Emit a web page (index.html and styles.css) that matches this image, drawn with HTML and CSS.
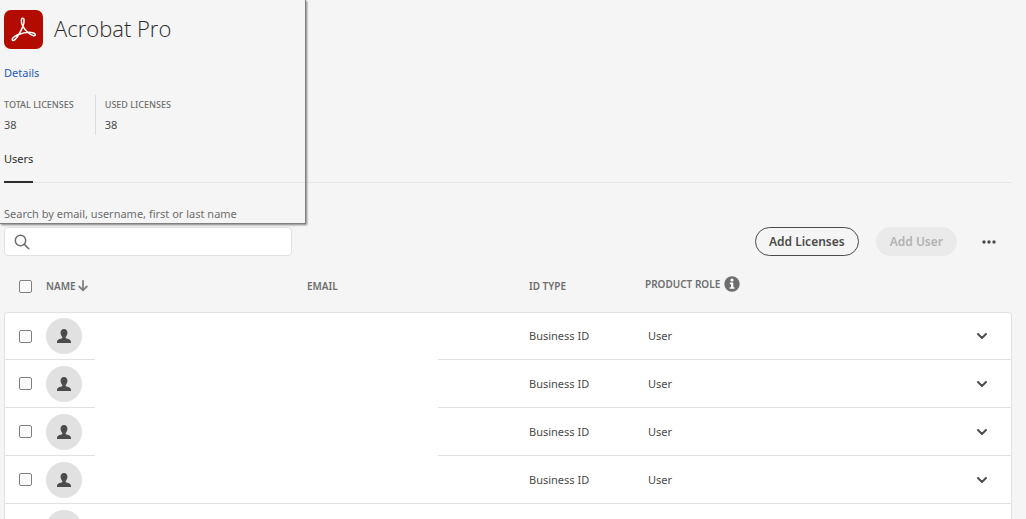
FILE: index.html
```html
<!DOCTYPE html>
<html lang="en">
<head>
<meta charset="utf-8">
<meta name="viewport" content="width=device-width, initial-scale=1">
<title>Acrobat Pro</title>
<link rel="stylesheet" href="styles.css">
</head>
<body>
<svg class="sprite" aria-hidden="true">
  <symbol id="person" viewBox="0 0 14 14"><path d="M7 0C4.900 0 3.600 1.400 3.600 3.600c0 1.900.7 3.500 1.700 4.400v1C5.300 9.600 0 9.800 0 13v1h14v-1c0-3.200-5.300-3.400-5.300-4V8c1-.9 1.700-2.500 1.700-4.400C10.400 1.400 9.100 0 7 0z"/></symbol>
  <symbol id="chevron" viewBox="0 0 10 6"><path d="M1 1l4 4 4-4" fill="none" stroke="currentColor" stroke-width="1.900" stroke-linecap="round" stroke-linejoin="round"/></symbol>
</svg>
<main class="page">
  <header class="summary">
    <div class="product">
      <svg class="product-logo" viewBox="0 0 39 39" role="img" aria-label="Adobe Acrobat">
        <rect width="39" height="39" rx="7" fill="#b30b00"/>
        <path d="M17.400 9.700c.3-2 2.500-2 2.700.1.300 3.300-2.600 10.600-6.300 16.200-2.500 3.800-4.200 5-5.200 4.300-1.500-1.200 1.100-3.900 5.200-5.500 5.200-2 11.700-2.900 15-2.100 3.300.8 3.200 3.200.8 3-3.500-.4-8.200-4.800-10.800-9.600-1.300-2.400-1.700-4.400-1.400-6.400z" fill="none" stroke="#fff" stroke-width="1.500" stroke-linejoin="round"/>
      </svg>
      <h1 class="product-name">Acrobat Pro</h1>
    </div>
    <a class="details" href="#details">Details</a>
    <dl class="stats">
      <div class="stat"><dt>TOTAL LICENSES</dt><dd>38</dd></div>
      <div class="stat"><dt>USED LICENSES</dt><dd>38</dd></div>
    </dl>
    <nav class="tabs"><a class="tab" href="#users" aria-current="page">Users</a></nav>
    <label class="search-label" for="search">Search by email, username, first or last name</label>
    <div class="frame" aria-hidden="true"></div>
  </header>
  <div class="toolbar">
    <div class="search">
      <svg class="search-icon" viewBox="0 0 16 16" aria-hidden="true"><circle cx="6.500" cy="6.500" r="5.200"/><path d="M10.400 10.400l4.400 4.400"/></svg>
      <input class="search-input" id="search" type="search">
    </div>
    <div class="actions">
      <button class="button" type="button">Add Licenses</button>
      <button class="button" type="button" disabled>Add User</button>
      <button class="icon-button" type="button" aria-label="More actions"><svg class="dots" viewBox="0 0 14 4" aria-hidden="true"><circle cx="2" cy="2" r="1.700"/><circle cx="7" cy="2" r="1.700"/><circle cx="12" cy="2" r="1.700"/></svg></button>
    </div>
  </div>
  <div class="table-area">
    <table class="users">
      <colgroup><col class="col-check"><col class="col-name"><col class="col-email"><col class="col-type"><col class="col-role"><col class="col-more"></colgroup>
      <thead>
        <tr>
          <th class="check-cell"><input class="check" type="checkbox" aria-label="Select all users"></th>
          <th><button class="sort" type="button">NAME <svg class="arrow" viewBox="0 0 10 12" aria-hidden="true"><path d="M5 1v9M1.200 6.500L5 10.300l3.800-3.800"/></svg></button></th>
          <th>EMAIL</th>
          <th>ID TYPE</th>
          <th class="role-head"><span class="role-label">PRODUCT ROLE <button class="info" type="button" aria-label="About product roles"><svg viewBox="0 0 16 16" aria-hidden="true"><circle cx="8" cy="8" r="7.700" fill="#6e6e6e"/><circle cx="8" cy="4" r="1.600" fill="#fff"/><path d="M5.800 6.600h3.500v4.600h1.200v1.600H5.700v-1.600H7V8.200H5.800z" fill="#fff"/></svg></button></span></th>
          <th></th>
        </tr>
      </thead>
      <tbody>
        <tr><td class="check-cell"><input class="check" type="checkbox" aria-label="Select user 1"></td><td><span class="avatar"><svg><use href="#person"/></svg></span></td><td></td><td>Business ID</td><td class="role">User</td><td class="more"><button class="icon-button" type="button" aria-label="Expand user 1"><svg class="chevron"><use href="#chevron"/></svg></button></td></tr>
        <tr><td class="check-cell"><input class="check" type="checkbox" aria-label="Select user 2"></td><td><span class="avatar"><svg><use href="#person"/></svg></span></td><td></td><td>Business ID</td><td class="role">User</td><td class="more"><button class="icon-button" type="button" aria-label="Expand user 2"><svg class="chevron"><use href="#chevron"/></svg></button></td></tr>
        <tr><td class="check-cell"><input class="check" type="checkbox" aria-label="Select user 3"></td><td><span class="avatar"><svg><use href="#person"/></svg></span></td><td></td><td>Business ID</td><td class="role">User</td><td class="more"><button class="icon-button" type="button" aria-label="Expand user 3"><svg class="chevron"><use href="#chevron"/></svg></button></td></tr>
        <tr><td class="check-cell"><input class="check" type="checkbox" aria-label="Select user 4"></td><td><span class="avatar"><svg><use href="#person"/></svg></span></td><td></td><td>Business ID</td><td class="role">User</td><td class="more"><button class="icon-button" type="button" aria-label="Expand user 4"><svg class="chevron"><use href="#chevron"/></svg></button></td></tr>
        <tr><td></td><td><span class="avatar"><svg><use href="#person"/></svg></span></td><td></td><td></td><td></td><td></td></tr>
      </tbody>
    </table>
    <div class="redaction" aria-hidden="true"></div>
  </div>
</main>
</body>
</html>
```

FILE: styles.css
```css
* { box-sizing: border-box; }
body {
  margin: 0;
  background: #f5f5f5;
  color: #4b4b4b;
  font: 11px/16px "Noto Sans", "Open Sans", sans-serif;
}
button { font: inherit; color: inherit; border: 0; padding: 0; background: none; cursor: pointer; }
.sprite { position: absolute; width: 0; height: 0; }
.page { height: 100vh; overflow: hidden; padding: 0 14px 0 4px; }

.summary { position: relative; padding: 10px 0 2px; }
.product { display: flex; align-items: flex-start; gap: 11px; }
.product-logo { width: 39px; height: 39px; }
.product-name { margin: 0; font-family: "Open Sans", sans-serif; font-size: 22px; line-height: 36px; font-weight: 300; color: #2c2c2c; }
.details { display: block; width: fit-content; margin-top: 16px; color: #1c5bbd; text-decoration: none; }
.stats { display: flex; margin: 14px 0 0; }
.stat + .stat { border-left: 1px solid #dcdcdc; margin-left: 21px; padding-left: 9px; }
.stat dt { font-size: 9px; line-height: 20px; font-weight: 500; color: #6e6e6e; }
.stat dd { margin: 0; line-height: 20px; }
.tabs { margin-top: 16px; border-bottom: 1px solid #e6e6e6; display: flex; }
.tab { height: 32px; margin-bottom: -1px; border-bottom: 2px solid #2c2c2c; color: #2c2c2c; text-decoration: none; }
.search-label { display: block; width: fit-content; margin-top: 23px; color: #6e6e6e; }
.frame {
  position: absolute;
  top: 0; bottom: 0; left: -4px;
  width: 306px;
  border: solid #808080;
  border-width: 0 1px 1px 0;
  box-shadow: 1px 1px 2px #808080;
  pointer-events: none;
}

.toolbar { display: flex; justify-content: space-between; align-items: center; padding-top: 3px; }
.search { position: relative; flex: 0 1 288px; }
.search-input { display: block; width: 100%; height: 29px; padding: 0 10px 0 34px; border: 1px solid #e1e1e1; border-radius: 4px; background: #fff; font: inherit; }
.search-icon { position: absolute; left: 10px; top: 7px; width: 16px; height: 16px; fill: none; stroke: #6e6e6e; stroke-width: 1.500; stroke-linecap: round; }
.actions { display: flex; align-items: center; gap: 17px; padding-right: 8px; }
.button { height: 29px; padding: 0 13px; border: 1px solid #4b4b4b; border-radius: 15px; font-weight: 600; font-size: 12px; }
.button:disabled { background: #eaeaea; border-color: #eaeaea; color: #b3b3b3; cursor: default; }
.icon-button { width: 30px; height: 28px; display: inline-flex; align-items: center; justify-content: center; }
.dots { width: 14px; height: 4px; fill: #4b4b4b; }

.table-area { position: relative; }
.users { width: 100%; table-layout: fixed; border-collapse: separate; border-spacing: 0; }
.col-check { width: 42px; }
.col-name { width: 261px; }
.col-email { width: 222px; }
.col-type { width: 116px; }
.col-more { width: 60px; }
.users th, .users td { padding: 0; text-align: left; vertical-align: middle; }
.users th { height: 56px; padding-top: 4px; font-size: 10px; line-height: 16px; font-weight: 600; color: #6e6e6e; }
.users td { height: 48px; background: #fff; border-bottom: 1px solid #e1e1e1; }
.users td:first-child { border-left: 1px solid #e1e1e1; }
.users td:last-child { border-right: 1px solid #e1e1e1; }
.users tbody tr:first-child td { border-top: 1px solid #e1e1e1; }
.users tbody tr:first-child td:first-child { border-top-left-radius: 4px; }
.users tbody tr:first-child td:last-child { border-top-right-radius: 4px; }
.users .check-cell { padding-left: 15px; }
.users td.check-cell { padding-left: 14px; }
.check { appearance: none; display: block; width: 13px; height: 13px; margin: 0; border: 1px solid #808080; border-radius: 2px; background: #fafafa; }
.check:checked { background: #4b4b4b; }
.sort { display: flex; align-items: center; gap: 2px; font-weight: 600; }
.arrow { width: 10px; height: 12px; fill: none; stroke: #808080; stroke-width: 1.800; stroke-linecap: round; stroke-linejoin: round; }
.users .role-head { padding-top: 0; }
.role-label { display: flex; align-items: center; gap: 4px; }
.info, .info svg { display: block; width: 16px; height: 16px; }
.avatar { display: flex; align-items: center; justify-content: center; width: 36px; height: 36px; border-radius: 50%; background: #e1e1e1; }
.avatar svg { width: 14px; height: 14px; fill: #4b4b4b; }
.users .role { padding-left: 3px; }
.users .more { text-align: right; padding-right: 14px; }
.more .icon-button { vertical-align: middle; }
.chevron { width: 10px; height: 6px; }
.redaction { position: absolute; top: 57px; left: 91px; width: 343px; height: 189px; background: #fff; }
```
